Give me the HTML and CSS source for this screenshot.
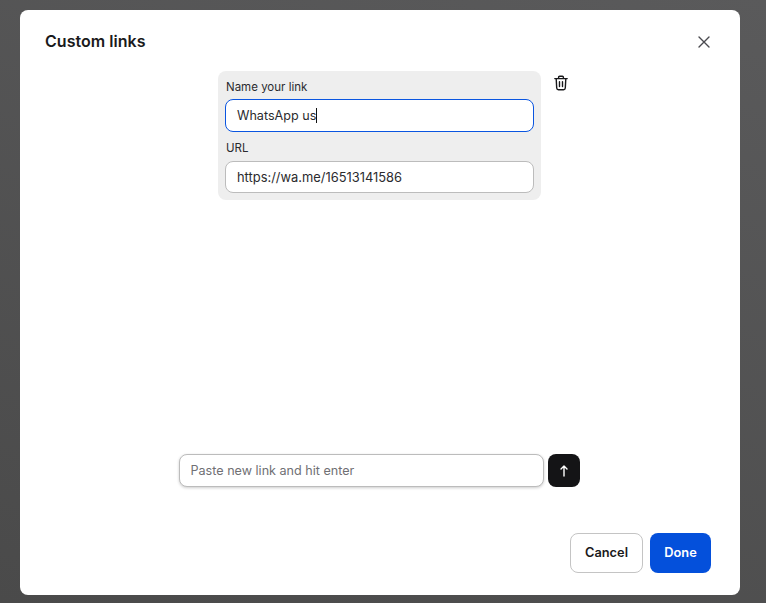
FILE: index.html
```html
<!DOCTYPE html>
<html lang="en">
<head>
  <meta charset="UTF-8" />
  <meta name="viewport" content="width=device-width, initial-scale=1" />
  <title>Custom links</title>
  <link rel="stylesheet" href="styles.css">
</head>
<body>
  <div class="backdrop">
    <div class="modal">
      <header class="modal-head">
        <h2>Custom links</h2>
        <button class="close-btn" aria-label="Close">
          <svg width="14" height="14" viewBox="0 0 14 14" fill="none" stroke="#4a4a4f" stroke-width="1.4" stroke-linecap="round">
            <path d="M2 2l10 10M12 2L2 12"/>
          </svg>
        </button>
      </header>

      <div class="link-list">
        <div class="link-row">
          <div class="link-card">
            <div class="field-label">Name your link</div>
            <div class="field field-focus">WhatsApp us<span class="caret"></span></div>
            <div class="field-label field-label-url">URL</div>
            <input class="field field-url" type="text" value="https://wa.me/16513141586" />
          </div>
          <button class="trash-btn" aria-label="Delete link">
            <svg width="16" height="16" viewBox="0 0 16 16" fill="none" stroke="#18181a" stroke-width="1.4" stroke-linecap="round" stroke-linejoin="round">
              <path d="M1.8 3.6h12.4"/>
              <path d="M5.6 3.4V2.2c0-.6.4-1 1-1h2.8c.6 0 1 .4 1 1v1.2"/>
              <path d="M3.2 3.8l.5 9.2c.1 1 .7 1.7 1.7 1.7h5.2c1 0 1.6-.7 1.7-1.7l.5-9.2"/>
              <path d="M6.5 6.8v4.8M9.5 6.8v4.8"/>
            </svg>
          </button>
        </div>
      </div>

      <div class="new-link">
        <input class="field field-new" type="text" placeholder="Paste new link and hit enter" />
        <button class="submit-btn" aria-label="Add link">
          <svg width="12" height="14" viewBox="0 0 12 14" fill="none" stroke="#fff" stroke-width="1.4" stroke-linecap="round" stroke-linejoin="round">
            <path d="M6 12V2.2M3 5L6 2l3 3"/>
          </svg>
        </button>
      </div>

      <footer class="modal-foot">
        <button class="btn btn-cancel">Cancel</button>
        <button class="btn btn-done">Done</button>
      </footer>
    </div>
  </div>
</body>
</html>
```

FILE: styles.css
```css
html, body {
  height: 100%;
}
body {
  margin: 0;
  font-family: Inter, "Noto Sans", sans-serif;
  color: #1a1a1c;
  overflow: hidden;
}
button {
  font-family: inherit;
  cursor: pointer;
}
.backdrop {
  box-sizing: border-box;
  height: 100%;
  padding: 10px 26px 8px 20px;
  background: linear-gradient(20deg, #4a4a4a, #5a5a5b);
}
.modal {
  height: 100%;
  display: flex;
  flex-direction: column;
  background: #fff;
  border-radius: 8px;
}
.modal-head {
  display: flex;
  justify-content: space-between;
  align-items: center;
  padding: 22px 29px 0 25px;
  height: 19px;
}
.modal-head h2 {
  margin: 0;
  font-size: 16px;
  font-weight: 600;
  line-height: 19px;
  letter-spacing: 0.03px;
}
.close-btn, .trash-btn {
  display: flex;
  padding: 0;
  background: none;
  border: none;
}
.link-list {
  flex: 1;
  display: flex;
  justify-content: center;
  padding-top: 20px;
}
.link-row {
  display: flex;
  gap: 12px;
  align-items: flex-start;
  margin-left: 27px;
}
.trash-btn {
  margin-top: 4px;
}
.link-card {
  box-sizing: border-box;
  width: 323px;
  height: 129px;
  padding: 8px 7px 7px;
  background: #eeeeee;
  border-radius: 8px;
}
.field-label {
  font-size: 11.5px;
  line-height: 16px;
  margin-bottom: 4px;
  margin-left: 1px;
  color: #2b2b2e;
}
.field-label-url {
  margin-top: 8px;
  margin-bottom: 5px;
}
.field {
  box-sizing: border-box;
  display: flex;
  align-items: center;
  width: 309px;
  height: 32px;
  padding: 0 11px;
  font-family: inherit;
  font-size: 12.6px;
  color: #2b2b2e;
  background: #fff;
  border: 1px solid #bcbcbc;
  border-radius: 8px;
  outline: none;
}
.field-focus {
  height: 33px;
  border-color: #0a55e0;
}
.field-url {
  font-size: 12.9px;
}
.caret {
  display: inline-block;
  width: 1px;
  height: 15px;
  background: #111;
}
.new-link {
  display: flex;
  justify-content: center;
  gap: 4px;
  margin-right: 2px;
}
.field-new {
  width: 365px;
  height: 33px;
  box-shadow: 0 1px 3px rgba(0, 0, 0, 0.2);
}
.field-new::placeholder {
  color: #707074;
}
.submit-btn {
  display: flex;
  align-items: center;
  justify-content: center;
  width: 32px;
  height: 33px;
  padding: 0;
  background: #141416;
  border: none;
  border-radius: 8px;
}
.modal-foot {
  display: flex;
  justify-content: flex-end;
  gap: 7px;
  padding: 46px 29px 22px 0;
}
.btn {
  height: 40px;
  padding: 0 0 1px;
  font-size: 12.8px;
  font-weight: 600;
  border-radius: 8px;
}
.btn-cancel {
  width: 73px;
  color: #1a1a1c;
  background: #fff;
  border: 1px solid #c4c4c4;
}
.btn-done {
  width: 61px;
  color: #fff;
  background: #0450db;
  border: none;
}
```
